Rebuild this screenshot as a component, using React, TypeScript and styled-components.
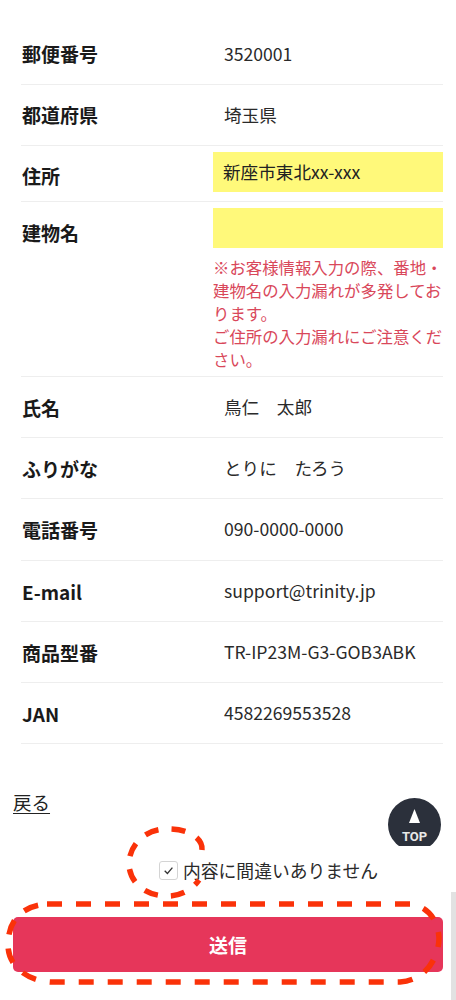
import React from 'react';
import styled, { createGlobalStyle } from 'styled-components';

const GlobalStyle = createGlobalStyle`
  html, body {
    margin: 0;
    padding: 0;
    background: #fff;
  }
  body {
    font-family: "Noto Sans CJK JP", "Noto Sans", sans-serif;
    color: #1d1d1d;
  }
`;

const Page = styled.div`
  position: relative;
  width: 456px;
  height: 1000px;
  overflow: hidden;
  background: #fff;
`;

const Table = styled.div`
  margin: 0 13px 0 21px;
  padding-top: 24px;
`;

const Row = styled.div<{ $h: number }>`
  display: grid;
  grid-template-columns: 192px 1fr;
  height: ${(p) => p.$h}px;
  box-sizing: content-box;
  border-bottom: 1px solid #eeeeee;
`;

const Label = styled.div<{ $top: number }>`
  padding: ${(p) => p.$top}px 0 0 1px;
  font-size: 19px;
  line-height: 26px;
  font-weight: 700;
  color: #1a1a1a;
`;

const Value = styled.div`
  padding: 17px 0 0 11px;
  font-size: 17.6px;
  line-height: 26px;
  color: #2a2a2a;
  white-space: pre;
`;

const FieldCell = styled.div`
  padding-top: 6px;
`;

const Filled = styled.div`
  height: 40px;
  background: #fff97a;
  padding-left: 10px;
  font-size: 17.6px;
  line-height: 40px;
  color: #222;
`;

const Notice = styled.p`
  margin: 8px -2px 0 0;
  font-size: 16.4px;
  line-height: 23px;
  color: #d9475a;
`;

const BackLink = styled.a`
  display: block;
  margin: 45px 0 0 13px;
  width: max-content;
  font-size: 18.5px;
  line-height: 26px;
  color: #222;
  text-decoration: underline;
  text-underline-offset: 3px;
`;

const ConfirmRow = styled.label`
  display: flex;
  align-items: center;
  gap: 5px;
  margin: 42px 0 0 159px;
  font-size: 17.8px;
  line-height: 26px;
  color: #2a2a2a;
`;

const CheckBox = styled.span`
  display: flex;
  align-items: center;
  justify-content: center;
  width: 19px;
  height: 19px;
  box-sizing: border-box;
  border: 1px solid #d4d4d4;
  border-radius: 3px;
  background: #fff;
`;

const SubmitButton = styled.button`
  display: block;
  width: 430px;
  height: 55px;
  margin: 34px 0 0 13px;
  border: 0;
  border-radius: 5px;
  background: #e6365a;
  color: #fff;
  font-family: inherit;
  font-size: 19px;
  font-weight: 700;
`;

const TopButton = styled.div`
  position: absolute;
  left: 388px;
  top: 798px;
  width: 53px;
  height: 48px;
  overflow: hidden;
`;

const Scrollbar = styled.div`
  position: absolute;
  right: 0;
  top: 892px;
  width: 5px;
  height: 108px;
  background: #e2e2e2;
`;

const Marks = styled.svg`
  position: absolute;
  left: 0;
  top: 0;
  pointer-events: none;
`;

const rows = [
  ['郵便番号', '3520001'],
  ['都道府県', '埼玉県'],
];
const lowerRows = [
  ['氏名', '鳥仁　太郎'],
  ['ふりがな', 'とりに　たろう'],
  ['電話番号', '090-0000-0000'],
  ['E-mail', 'support@trinity.jp'],
  ['商品型番', 'TR-IP23M-G3-GOB3ABK'],
  ['JAN', '4582269553528'],
];

const App = () => {
  return (
    <Page>
      <GlobalStyle />
      <Table>
        {rows.map(([k, v]) => (
          <Row key={k} $h={60}>
            <Label $top={17}>{k}</Label>
            <Value>{v}</Value>
          </Row>
        ))}
        <Row $h={55}>
          <Label $top={17}>住所</Label>
          <FieldCell>
            <Filled>新座市東北xx-xxx</Filled>
          </FieldCell>
        </Row>
        <Row $h={174}>
          <Label $top={18}>建物名</Label>
          <FieldCell>
            <Filled />
            <Notice>
              ※お客様情報入力の際、番地・建物名の入力漏れが多発しております。
              <br />
              ご住所の入力漏れにご注意ください。
            </Notice>
          </FieldCell>
        </Row>
        {lowerRows.map(([k, v]) => (
          <Row key={k} $h={60.2}>
            <Label $top={18}>{k}</Label>
            <Value>{v}</Value>
          </Row>
        ))}
      </Table>
      <BackLink href="#">戻る</BackLink>
      <ConfirmRow>
        <CheckBox>
          <svg width="13" height="13" viewBox="0 0 12 12" fill="none">
            <path d="M2.5 6.3 L5 8.8 L9.6 3.4" stroke="#333" strokeWidth="1.2" />
          </svg>
        </CheckBox>
        内容に間違いありません
      </ConfirmRow>
      <SubmitButton>送信</SubmitButton>
      <TopButton>
        <svg width="53" height="53" viewBox="0 0 53 53">
          <circle cx="26.5" cy="26.5" r="26.5" fill="#2b303b" />
          <path d="M26.5 11 L32 25 H21 Z" fill="#fff" />
          <text x="26.5" y="43" textAnchor="middle" fontFamily="Roboto, sans-serif" fontWeight="700" fontSize="13" fill="#e8e8e8">TOP</text>
        </svg>
      </TopButton>
      <Scrollbar />
      <Marks width="456" height="1000" viewBox="0 0 456 1000" fill="none" stroke="#fa3209" strokeWidth="5.5">
        <path d="M202 850 C203 838 188 828 165 829 C142 830 128 848 129 866 C131 884 146 896 168 896 C180 896 192 890 199 880" strokeDasharray="14 13" />
        <path d="M47 904 H410 C428 906 438 920 439 938 C439 955 428 980 400 982 H50 C25 980 8 965 8 945 C8 922 20 906 47 904 Z" strokeDasharray="15 14" />
      </Marks>
    </Page>
  );
};

export default App;
